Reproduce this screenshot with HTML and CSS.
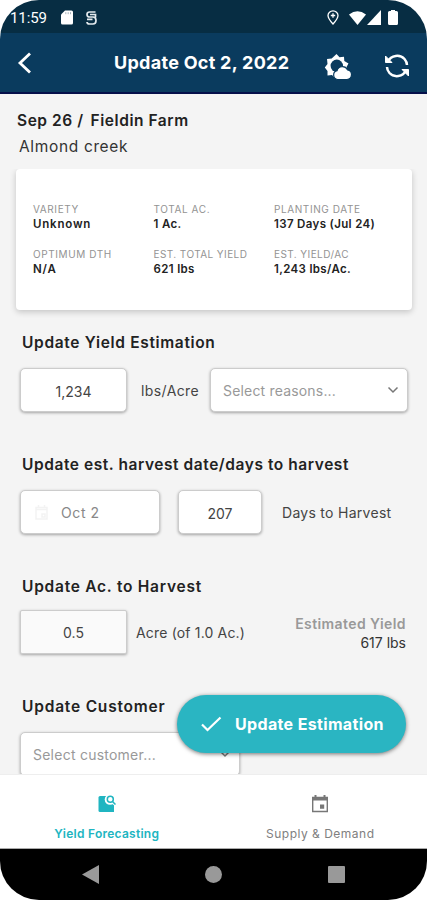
FILE: index.html
```html
<!DOCTYPE html>
<html lang="en">
<head>
<meta charset="utf-8">
<title>Update Estimation</title>
<link rel="stylesheet" href="styles.css">
</head>
<body>
<div class="phone">
  <div class="status">
    <span class="clock">11:59</span>
    <svg class="sd" width="12" height="15" viewBox="0 0 12 15"><path d="M4 .5h6.500Q12 .5 12 2v11q0 1.500-1.500 1.500h-9Q0 14.500 0 13V4.500z" fill="#fff"/><path d="M4.800 2.200v2M7.200 2.200v2M9.500 2.200v2" stroke="#8fa0ab" stroke-width=".8"/></svg>
    <svg class="sync" width="11" height="14" viewBox="0 0 11 14" fill="none" stroke="#e3e9ed" stroke-width="1.700"><path d="M9.500 1H3.500Q1 1 1 3.500T3.500 6H7Q10 6 10 9.500T7 13H3.500Q1 13 1 11M4 3.500h5.500v3M1 8.300h5.500"/></svg>
    <span class="grow"></span>
    <svg class="pin" width="12" height="15" viewBox="0 0 12 15" fill="none" stroke="#fff" stroke-width="1.300"><path d="M6 14Q1 8.500 1 5.500a5 4.700 0 0 1 10 0Q11 8.500 6 14z"/><path d="M6 3.300v4.400M3.800 5.500h4.400"/></svg>
    <svg class="wifi" width="17" height="14" viewBox="0 0 17 14"><path d="M0 3.500Q8.500-3 17 3.500L8.500 14z" fill="#fff"/></svg>
    <svg class="cell" width="14" height="15" viewBox="0 0 14 15"><path d="M14 0v15H0z" fill="#fff"/></svg>
    <svg width="10" height="15" viewBox="0 0 10 15"><path d="M3 0h4v1h1.500Q10 1 10 2.500v11q0 1.500-1.500 1.500h-7Q0 15 0 13.500v-11Q0 1 1.500 1H3z" fill="#fff"/></svg>
  </div>
  <header class="bar">
    <svg class="back" width="15" height="22" viewBox="0 0 15 22" fill="none" stroke="#fff" stroke-width="2.800"><path d="M13 1.500 3 11l10 9.500"/></svg>
    <h1>Update Oct 2, 2022</h1>
    <svg class="weather" width="28" height="28" viewBox="0 0 28 28"><path d="M12.500 1l3 3.300 4.500-.5.300 4.300 4.200 2.400-2 3.500 1 4-4 1-1 4h-4.500L11 25l-3-3-4.500.5V18L.800 14.500 3.500 11 3 6l4.700-.5z" fill="#fff"/><circle cx="12.800" cy="12.800" r="6.200" fill="#0a3b5e"/><path d="M13.500 26.500a4.500 4.500 0 0 1-.5-8.800 5.700 5.700 0 0 1 10.500-.9 4.900 4.900 0 0 1-.5 9.700z" fill="#fff" stroke="#0a3b5e" stroke-width="1.200"/></svg>
    <svg width="26" height="24" viewBox="0 0 26 24" fill="none" stroke="#fff" stroke-width="2.500"><path d="M4 7.500C7 1 16 0 20.500 5Q23 8 23 11M22 16.500C19 23 10 24 5.500 19Q3 16 3 13"/><path d="M1.500 2v6.500H8zM24.500 22v-6.500H18z" fill="#fff" stroke-width="1"/></svg>
  </header>
  <main>
    <div class="crumb"><span class="date">Sep 26 /</span><span class="farm">Fieldin Farm</span></div>
    <div class="field-name">Almond creek</div>
    <section class="card">
      <div><span class="k">VARIETY</span><span class="v wide">Unknown</span></div>
      <div><span class="k">TOTAL AC.</span><span class="v">1 Ac.</span></div>
      <div><span class="k">PLANTING DATE</span><span class="v">137 Days (Jul 24)</span></div>
      <div><span class="k">OPTIMUM DTH</span><span class="v wide">N/A</span></div>
      <div><span class="k tight">EST. TOTAL YIELD</span><span class="v">621 lbs</span></div>
      <div><span class="k tight">EST. YIELD/AC</span><span class="v">1,243 lbs/Ac.</span></div>
    </section>
    <section class="group yield">
      <h2 class="h-yield">Update Yield Estimation</h2>
      <div class="row">
        <div class="box w106 low">1,234</div>
        <span class="unit lbs">lbs/Acre</span>
        <div class="box select reasons"><span>Select reasons...</span><svg width="12" height="8" viewBox="0 0 12 8" fill="none" stroke="#777" stroke-width="1.500"><path d="m1.500 1.500 4.500 4.500 4.500-4.500"/></svg></div>
      </div>
    </section>
    <section class="group date-group">
      <h2 class="h-date">Update est. harvest date/days to harvest</h2>
      <div class="row">
        <div class="box day"><svg width="13" height="15" viewBox="0 0 13 15" fill="none" stroke="#f3f3f3" stroke-width="1.500"><path d="M1 2.500h11V14H1zM1 4.500h11M3.500 0v3M9.500 0v3M7 9h3v3H7z"/></svg><span>Oct 2</span></div>
        <div class="box w83 low">207</div>
        <span class="unit days">Days to Harvest</span>
      </div>
    </section>
    <section class="group acre-group">
      <h2 class="h-acre">Update Ac. to Harvest</h2>
      <div class="row">
        <div class="box w106 square">0.5</div>
        <span class="unit acre">Acre (of 1.0 Ac.)</span>
        <div class="est"><b>Estimated Yield</b><span>617 lbs</span></div>
      </div>
    </section>
    <section class="group customer-group">
      <h2 class="h-cust">Update Customer</h2>
      <div class="box select customer"><span>Select customer...</span><svg width="12" height="8" viewBox="0 0 12 8" fill="none" stroke="#777" stroke-width="1.500"><path d="m1.500 1.500 4.500 4.500 4.500-4.500"/></svg></div>
    </section>
    <div class="fab"><svg width="21" height="16" viewBox="0 0 21 16" fill="none" stroke="#fff" stroke-width="2.200"><path d="m1 8.500 5.500 5.500L19.500 1.500"/></svg><span>Update Estimation</span></div>
  </main>
  <nav class="tabs">
    <div class="tab on"><svg width="18" height="18" viewBox="0 0 18 18"><path d="M2 1h14v16H2Q.500 17 .500 15.500v-13Q.500 1 2 1z" fill="#20b5c1"/><circle cx="12" cy="4.500" r="5.300" fill="#fff"/><path d="m12 7 6-4v9z" fill="#fff"/><g fill="none" stroke="#20b5c1" stroke-width="1.500"><circle cx="12.300" cy="4.300" r="3"/><path d="m14.500 6.500 3 3"/></g></svg><span>Yield Forecasting</span></div>
    <div class="tab"><svg width="18" height="18" viewBox="0 0 18 18"><path d="M1.700 2.500h14.600v14H1.700z" fill="none" stroke="#777" stroke-width="1.400"/><path d="M1 2.500h16v3H1zM3.500 0h2v3h-2zM12.500 0h2v3h-2zM9 9.500h4.200v4.200H9z" fill="#777"/></svg><span>Supply &amp; Demand</span></div>
  </nav>
  <div class="system">
    <svg width="17" height="19" viewBox="0 0 17 19"><path d="M17 0v19L0 9.500z" fill="#999"/></svg>
    <svg width="17" height="17" viewBox="0 0 17 17"><circle cx="8.500" cy="8.500" r="8.500" fill="#999"/></svg>
    <svg width="17" height="17" viewBox="0 0 17 17"><rect width="17" height="17" rx="1" fill="#999"/></svg>
  </div>
</div>
</body>
</html>
```
FILE: styles.css
```css
* { box-sizing: border-box; }
body { margin: 0; background: #fff; font-family: Inter, "Liberation Sans", sans-serif; color: #222; }
svg { display: block; flex: none; }
span, h1, h2, b { white-space: nowrap; }
.phone { width: 427px; height: 900px; border-radius: 39px; overflow: hidden; display: flex; flex-direction: column; background: #f4f4f4; }
.status { height: 33px; flex: none; background: #072d43; display: flex; align-items: center; padding: 2px 29px 0 10px; }
.clock { font: 15px Roboto, sans-serif; color: #fff; width: 51px; letter-spacing: -.1px; }
.sync { margin-left: 13px; }
.grow { flex: 1; }
.wifi { margin-left: 10px; }
.cell { margin: 0 7px 0 1px; }
.bar { height: 61px; flex: none; background: #0a3b5e; border-bottom: 2px solid #05104a; display: flex; align-items: center; padding: 0 17px; color: #fff; }
h1 { margin: 0 0 0 82px; width: 211px; font-size: 18px; line-height: 22px; font-weight: 700; letter-spacing: .28px; }
.weather { margin: 8px 32px 0 0; }
.bar svg:last-child { margin-top: 6px; }
main { height: 680px; flex: none; overflow: hidden; position: relative; padding: 16px 15px 0 16px; }
.crumb { display: flex; gap: 7px; height: 21px; line-height: 21px; font-size: 15.5px; font-weight: 600; padding-left: 1px; letter-spacing: .55px; }
.field-name { height: 20px; line-height: 20px; margin: 6px 0 0 3px; font-size: 15.5px; letter-spacing: .65px; color: #333; }
.card { margin-top: 12px; height: 141px; background: #fff; border-radius: 4px; box-shadow: 0 2px 6px #0003; clip-path: inset(0 -10px -10px -10px); display: grid; grid-template-columns: 120.5px 120.5px 1fr; grid-auto-rows: 45px; padding: 33px 0 0 17px; }
.card span { display: block; line-height: 15px; }
.k { color: #939393; font-size: 10px; letter-spacing: .6px; }
.tight { letter-spacing: .42px; }
.v { font-size: 11.5px; font-weight: 600; letter-spacing: .35px; }
.wide { letter-spacing: .8px; }
h2 { margin: 0; padding-left: 6px; font-size: 15.5px; line-height: 20px; font-weight: 600; letter-spacing: .66px; }
.h-date { letter-spacing: .56px; }
.h-acre { letter-spacing: .75px; }
.h-cust { letter-spacing: .8px; }
.group { display: flex; flex-direction: column; }
.row { display: flex; align-items: center; }
.box { height: 44px; margin-left: 4px; background: #fff; border: 1px solid #ccc; border-radius: 5px; box-shadow: 0 1px 3px #0005; display: flex; align-items: center; justify-content: center; font-size: 14px; color: #444; flex: none; }
.w106 { width: 107px; }
.w83 { width: 84px; margin-left: 18px; }
.low { padding-top: 2px; }
.square { border-radius: 2px; background: #fafafa; }
.select { justify-content: space-between; color: #999; letter-spacing: .18px; }
.unit { font-size: 14px; color: #444; }
.yield { margin-top: 23px; gap: 15px; }
.reasons { width: 198px; margin-left: 10px; padding: 0 8px 0 12px; }
.lbs { width: 59px; margin-left: 14px; letter-spacing: .4px; }
.date-group { margin-top: 43px; gap: 15px; }
.day { width: 140px; justify-content: flex-start; gap: 13px; padding-left: 14px; color: #888; letter-spacing: .6px; }
.days { margin-left: 20px; letter-spacing: .28px; }
.acre-group { margin-top: 43px; gap: 13px; }
.acre { margin-left: 9px; letter-spacing: .17px; }
.est { margin: 0 6px 0 auto; display: flex; flex-direction: column; align-items: flex-end; line-height: 19px; font-size: 14px; color: #333; padding-top: 1px; }
.est b { font-weight: 600; color: #999; letter-spacing: .4px; }
.customer-group { margin-top: 43px; gap: 15px; }
.customer { width: 220px; padding: 0 8px 0 12px; letter-spacing: .24px; }
.fab { position: absolute; left: 177px; top: 601px; width: 229px; height: 58px; border-radius: 29px; background: #2ab5c2; box-shadow: 0 1px 4px #0008; display: flex; align-items: center; padding-left: 24px; gap: 13px; color: #fff; font-size: 16px; font-weight: 700; letter-spacing: .35px; }
.tabs { height: 75px; flex: none; background: #fff; border-bottom: 1px solid #aaa; border-top: 1px solid #eee; display: grid; grid-template-columns: 1fr 1fr; }
.tab { display: flex; flex-direction: column; align-items: center; padding-top: 20px; color: #808080; font-size: 12px; line-height: 18px; gap: 12px; letter-spacing: .5px; }
.on { color: #20b5c1; font-weight: 600; letter-spacing: .25px; }
.system { flex: 1; background: #000; display: flex; justify-content: space-between; align-items: center; padding: 0 82px; }
```
